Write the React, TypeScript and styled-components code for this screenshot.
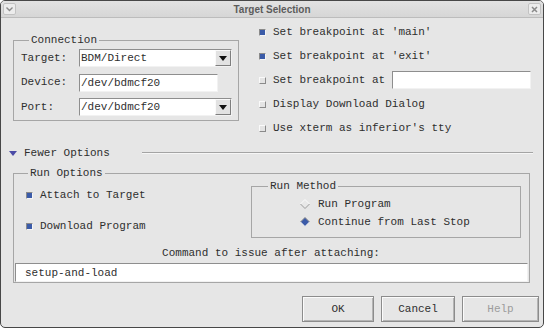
import React from 'react';
import styled, { createGlobalStyle } from 'styled-components';

const GlobalStyle = createGlobalStyle`
  html, body {
    margin: 0;
    padding: 0;
    background: #ffffff;
  }
  * {
    box-sizing: border-box;
  }
`;

const Window = styled.div`
  width: 544px;
  height: 328px;
  border: 1px solid #474747;
  border-radius: 5px;
  overflow: hidden;
  display: flex;
  flex-direction: column;
  background: #e6e6e6;
  font-family: "Liberation Mono", "DejaVu Sans Mono", monospace;
  font-size: 11px;
  line-height: 13px;
  color: #2e2e2e;
`;

const TitleBar = styled.div`
  height: 17px;
  flex: none;
  display: flex;
  align-items: center;
  justify-content: space-between;
  padding: 0 2px;
  background: linear-gradient(#e2e2e2, #d6d6d6);
  border-bottom: 1px solid #bcbcbc;
`;

const Title = styled.div`
  font-family: "Liberation Sans", Arial, sans-serif;
  font-size: 10px;
  font-weight: bold;
  color: #5c5c5c;
`;

const TitleButton = styled.div`
  width: 13px;
  height: 12px;
  border: 1px solid #c2c2c2;
  border-radius: 2px;
  background: #ececec;
  display: flex;
  align-items: center;
  justify-content: center;
`;

const TopSection = styled.div`
  display: flex;
  align-items: flex-start;
  gap: 20px;
  padding: 2px 0 0 12px;
`;

const Frame = styled.fieldset<{ $width?: number }>`
  margin: 0;
  min-width: 0;
  border: 1px solid #a6a6a6;
  ${p => (p.$width ? `width: ${p.$width}px;` : '')}
`;

const ConnectionFrame = styled(Frame)`
  margin-top: 14px;
  padding: 2px 6px 4px 7px;
`;

const Legend = styled.legend<{ $offset: number }>`
  padding: 0 2px;
  margin-left: ${p => p.$offset}px;
  line-height: 13px;
`;

const FormGrid = styled.div`
  display: grid;
  grid-template-columns: 58px auto;
  grid-auto-rows: 18px;
  row-gap: 6.5px;
  align-items: center;
`;

const Entry = styled.input<{ $width: number; $pad?: number; $height?: number }>`
  width: ${p => p.$width}px;
  height: ${p => p.$height ?? 18}px;
  margin: 0;
  padding: 0 ${p => p.$pad ?? 1}px;
  background: #ffffff;
  border: 1px solid;
  border-color: #8e8e8e #f2f2f2 #f2f2f2 #8e8e8e;
  font: inherit;
  color: #2e2e2e;
  outline: none;
`;

const Combo = styled.div`
  width: 153px;
  height: 18px;
  display: flex;
  border: 1px solid;
  border-color: #8e8e8e #f2f2f2 #f2f2f2 #8e8e8e;
  background: #ffffff;
`;

const ComboText = styled.div`
  flex: 1;
  padding: 0 1px;
  display: flex;
  align-items: center;
`;

const ComboButton = styled.div`
  width: 16px;
  display: flex;
  align-items: center;
  justify-content: center;
  background: #e2e2e2;
  border: 1px solid;
  border-color: #fafafa #7e7e7e #7e7e7e #fafafa;
`;

const CheckColumn = styled.div`
  display: flex;
  flex-direction: column;
`;

const CheckRow = styled.div<{ $height?: number }>`
  height: ${p => p.$height ?? 24}px;
  display: flex;
  align-items: center;
  gap: 7px;
  white-space: pre;
`;

const CheckBox = styled.span<{ $checked?: boolean }>`
  width: 7px;
  height: 7px;
  flex: none;
  border: 1px solid;
  border-color: ${p =>
    p.$checked ? '#8a8a8a #f4f4f4 #f4f4f4 #8a8a8a' : '#fafafa #8a8a8a #8a8a8a #fafafa'};
  background: ${p => (p.$checked ? '#3b5ba8' : '#e4e4e4')};
`;

const ToggleRow = styled.div`
  height: 26px;
  display: flex;
  align-items: center;
  padding: 0 10px 0 8px;
`;

const ToggleLabel = styled.span`
  margin-left: 7px;
`;

const Rule = styled.div`
  flex: 1;
  height: 2px;
  margin-left: 32px;
  border-top: 1px solid #a4a4a4;
  border-bottom: 1px solid #f6f6f6;
`;

const RunFrame = styled(Frame)`
  margin: 1px 13px 0 12px;
  padding: 0 2px 0 1px;
`;

const RunGrid = styled.div`
  display: grid;
  grid-template-columns: 1fr 270px;
  padding: 0 6px 0 11px;
`;

const RunChecks = styled.div`
  display: flex;
  flex-direction: column;
  gap: 7px;
  padding-top: 3px;
`;

const MethodFrame = styled(Frame)`
  padding: 2px 0 4px 48px;
`;

const RadioRow = styled.div`
  height: 18px;
  display: flex;
  align-items: center;
  gap: 8px;
`;

const CommandLabel = styled.div`
  margin-top: 9px;
  text-align: center;
`;

const CommandEntry = styled(Entry)`
  display: block;
  margin: 3px 0 0 0;
`;

const ButtonRow = styled.div`
  display: flex;
  justify-content: flex-end;
  gap: 7px;
  margin-top: 13px;
  padding-right: 4px;
`;

const Button = styled.button<{ $width: number; $disabled?: boolean }>`
  width: ${p => p.$width}px;
  height: 26px;
  margin: 0;
  padding: 0;
  background: #e6e6e6;
  border: 1px solid #8c8c8c;
  box-shadow: inset 1px 1px 0 #fbfbfb, inset -1px -1px 0 #b4b4b4;
  font: inherit;
  font-weight: normal;
  color: ${p => (p.$disabled ? '#9c9c9c' : '#2e2e2e')};
`;

const Arrow = () => (
  <svg width="8" height="5" viewBox="0 0 8 5">
    <polygon points="0,0 8,0 4,5" fill="#111111" />
  </svg>
);

const Diamond = ({ selected }: { selected?: boolean }) => (
  <svg width="10" height="10" viewBox="0 0 10 10" style={{ flex: 'none' }}>
    <polygon points="5,0.5 9.5,5 5,9.5 0.5,5" fill={selected ? '#3b5ba8' : '#e8e8e8'} />
    <polyline points="0.5,5 5,0.5 9.5,5" fill="none" stroke={selected ? '#8a8a8a' : '#fafafa'} strokeWidth="1" />
    <polyline points="0.5,5 5,9.5 9.5,5" fill="none" stroke={selected ? '#f4f4f4' : '#9a9a9a'} strokeWidth="1" />
  </svg>
);

const App = () => (
  <>
    <GlobalStyle />
    <Window>
      <TitleBar>
        <TitleButton>
          <svg width="7" height="5" viewBox="0 0 7 5">
            <polyline points="0.5,0.5 3.5,3.5 6.5,0.5" fill="none" stroke="#8a8a8a" strokeWidth="1.4" />
          </svg>
        </TitleButton>
        <Title>Target Selection</Title>
        <TitleButton>
          <svg width="7" height="7" viewBox="0 0 7 7">
            <path d="M1 1 L6 6 M6 1 L1 6" stroke="#8a8a8a" strokeWidth="1.5" />
          </svg>
        </TitleButton>
      </TitleBar>

      <TopSection>
        <ConnectionFrame $width={226}>
          <Legend $offset={8}>Connection</Legend>
          <FormGrid>
            <span>Target:</span>
            <Combo>
              <ComboText>BDM/Direct</ComboText>
              <ComboButton><Arrow /></ComboButton>
            </Combo>
            <span>Device:</span>
            <Entry $width={139} readOnly value="/dev/bdmcf20" />
            <span>Port:</span>
            <Combo>
              <ComboText>/dev/bdmcf20</ComboText>
              <ComboButton><Arrow /></ComboButton>
            </Combo>
          </FormGrid>
        </ConnectionFrame>

        <CheckColumn>
          <CheckRow><CheckBox $checked />Set breakpoint at 'main'</CheckRow>
          <CheckRow><CheckBox $checked />Set breakpoint at 'exit'</CheckRow>
          <CheckRow>
            <CheckBox />Set breakpoint at
            <Entry $width={139} readOnly value="" />
          </CheckRow>
          <CheckRow><CheckBox />Display Download Dialog</CheckRow>
          <CheckRow><CheckBox />Use xterm as inferior's tty</CheckRow>
        </CheckColumn>
      </TopSection>

      <ToggleRow>
        <svg width="8" height="5" viewBox="0 0 8 5">
          <polygon points="0,0 8,0 4,5" fill="#4b4ba6" />
        </svg>
        <ToggleLabel>Fewer Options</ToggleLabel>
        <Rule />
      </ToggleRow>

      <RunFrame>
        <Legend $offset={13}>Run Options</Legend>
        <RunGrid>
          <RunChecks>
            <CheckRow><CheckBox $checked />Attach to Target</CheckRow>
            <CheckRow><CheckBox $checked />Download Program</CheckRow>
          </RunChecks>
          <MethodFrame $width={270}>
            <Legend $offset={-32}>Run Method</Legend>
            <RadioRow><Diamond />Run Program</RadioRow>
            <RadioRow><Diamond selected />Continue from Last Stop</RadioRow>
          </MethodFrame>
        </RunGrid>
        <CommandLabel>Command to issue after attaching:</CommandLabel>
        <CommandEntry $width={513} $height={19} $pad={9} readOnly value="setup-and-load" />
      </RunFrame>

      <ButtonRow>
        <Button $width={72}>OK</Button>
        <Button $width={74}>Cancel</Button>
        <Button $width={77} $disabled>Help</Button>
      </ButtonRow>
    </Window>
  </>
);

export default App;
